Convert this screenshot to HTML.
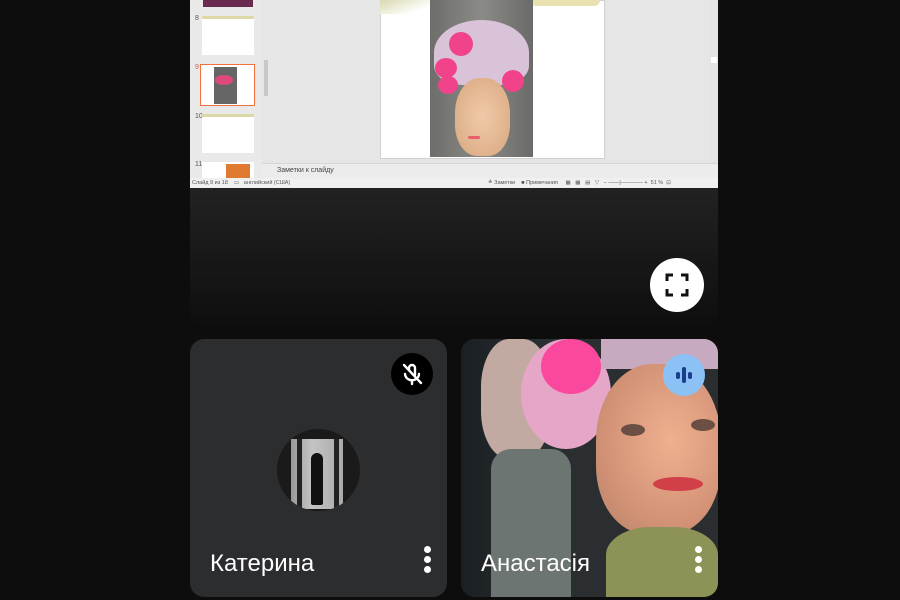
<!DOCTYPE html>
<html><head><meta charset="utf-8"><style>
*{margin:0;padding:0;box-sizing:border-box}
body{width:900px;height:600px;background:#0d0d0d;position:relative;overflow:hidden;font-family:"Liberation Sans",sans-serif}
.a{position:absolute}
</style></head><body>
<!-- screen share -->
<div class="a" style="left:190px;top:0;width:528px;height:326px;border-radius:0 0 14px 14px;overflow:hidden;background:linear-gradient(#3a3a3a,#2a2a2a 40%,#0e0e0e)">
  <div class="a" style="left:0;top:0;width:528px;height:188px;background:#e6e6e6"></div>
  <div class="a" style="left:0;top:0;width:72px;height:178px;background:#e9e9e9"></div>
  <div class="a" style="left:13px;top:0;width:50px;height:7px;background:#6a2a50"></div>
  <div class="a" style="left:5px;top:15px;font-size:7px;color:#555">8</div>
  <div class="a" style="left:12px;top:16px;width:52px;height:39px;background:#fff;border-top:3px solid #dcd8a8"></div>
  <div class="a" style="left:5px;top:64px;font-size:7px;color:#e5562e">9</div>
  <div class="a" style="left:10px;top:64px;width:55px;height:42px;border:1.5px solid #f07040;background:#fff"></div>
  <div class="a" style="left:24px;top:67px;width:23px;height:37px;background:#666"></div>
  <div class="a" style="left:25px;top:75px;width:18px;height:10px;background:#e04880;border-radius:50%"></div>
  <div class="a" style="left:5px;top:113px;font-size:7px;color:#555">10</div>
  <div class="a" style="left:12px;top:114px;width:52px;height:39px;background:#fff;border-top:3px solid #dcd8a8"></div>
  <div class="a" style="left:5px;top:161px;font-size:7px;color:#555">11</div>
  <div class="a" style="left:12px;top:162px;width:52px;height:16px;background:#fff"></div>
  <div class="a" style="left:36px;top:164px;width:24px;height:14px;background:#e07a30"></div>
  <div class="a" style="left:74px;top:60px;width:4px;height:36px;background:#c8c8c8"></div>
  <div class="a" style="left:190px;top:0;width:225px;height:159px;background:#fff;border:1px solid #d0d0d0"></div>
  <div class="a" style="left:190px;top:0;width:60px;height:14px;background:linear-gradient(160deg,#d8d8b0,#fff 70%)"></div>
  <div class="a" style="left:340px;top:0;width:70px;height:6px;background:#e8e2b0;border-radius:0 0 30px 30px"></div>
  <div class="a" style="left:240px;top:0;width:103px;height:157px;background:linear-gradient(90deg,#6d6d6b,#8a8a86 50%,#6a6a68)"></div>
  <div class="a" style="left:244px;top:20px;width:95px;height:65px;border-radius:50% 50% 30% 30%;background:#d9c3d8"></div>
  <div class="a" style="left:259px;top:32px;width:24px;height:24px;border-radius:50%;background:#f0438a"></div>
  <div class="a" style="left:245px;top:58px;width:22px;height:20px;border-radius:50%;background:#f0438a"></div>
  <div class="a" style="left:248px;top:76px;width:20px;height:18px;border-radius:50%;background:#f0438a"></div>
  <div class="a" style="left:312px;top:70px;width:22px;height:22px;border-radius:50%;background:#f0438a"></div>
  <div class="a" style="left:265px;top:78px;width:55px;height:78px;border-radius:45% 45% 40% 40%;background:radial-gradient(#f1c9a8,#d8a880)"></div>
  <div class="a" style="left:278px;top:136px;width:12px;height:3px;background:#e6606a;border-radius:2px"></div>
  <div class="a" style="left:520px;top:0;width:8px;height:178px;background:#e4e4e4"></div>
  <div class="a" style="left:521px;top:57px;width:6px;height:6px;background:#fff"></div>
  <div class="a" style="left:72px;top:163px;width:456px;height:15px;background:#ececec;border-top:1px solid #d6d6d6;font-size:7px;color:#444;padding:3px 0 0 15px">Заметки к слайду</div>
  <div class="a" style="left:0;top:178px;width:528px;height:10px;background:#f0f0f0;font-size:5.5px;color:#555;line-height:10px;padding-left:2px">Слайд 9 из 18 &nbsp;&nbsp; ▭ &nbsp;&nbsp;английский (США)<span style="position:absolute;left:298px">≙ Заметки &nbsp;&nbsp; ■ Примечания &nbsp;&nbsp;&nbsp; ▦ &nbsp; ▦ &nbsp; ▤ &nbsp; ▽ &nbsp; − ——|———— + &nbsp;51 % &nbsp;⊡</span></div>
  <div class="a" style="left:460px;top:258px;width:54px;height:54px;border-radius:50%;background:#fff">
    <svg width="54" height="54" viewBox="0 0 54 54" fill="none" stroke="#111" stroke-width="3"><path d="M17 23v-6h6M31 17h6v6M37 31v6h-6M23 37h-6v-6"/></svg>
  </div>
</div>
<!-- tile 1 -->
<div class="a" style="left:190px;top:339px;width:257px;height:258px;border-radius:14px;background:#2c2d2f">
  <div class="a" style="left:201px;top:14px;width:42px;height:42px;border-radius:50%;background:#000">
    <svg width="42" height="42" viewBox="0 0 42 42" fill="none" stroke="#fff" stroke-width="2.4" stroke-linecap="round"><path d="M18 17v-2a3 3 0 0 1 6 0v7"/><path d="M14 21a7 7 0 0 0 11 5M28 21a7 7 0 0 1-.8 3M21 28v3"/><path d="M13 12l17 18"/></svg>
  </div>
  <div class="a" style="left:87px;top:90px;width:83px;height:82px;border-radius:50%;overflow:hidden;background:#1a1a1a">
    <div class="a" style="left:14px;top:10px;width:52px;height:70px;background:linear-gradient(90deg,#999,#c4c4c4 40%,#aaa)"></div>
    <div class="a" style="left:20px;top:10px;width:5px;height:70px;background:#222"></div>
    <div class="a" style="left:57px;top:10px;width:5px;height:70px;background:#222"></div>
    <div class="a" style="left:34px;top:24px;width:12px;height:52px;border-radius:6px 6px 2px 2px;background:#111"></div>
  </div>
  <div class="a" style="left:20px;top:211px;font-size:24px;color:#fff;font-weight:500">Катерина</div>
  <div class="a" style="left:234px;top:207px;width:7px;height:7px;border-radius:50%;background:#fff;box-shadow:0 10px #fff,0 20px #fff"></div>
</div>
<!-- tile 2 -->
<div class="a" style="left:461px;top:339px;width:257px;height:258px;border-radius:14px;overflow:hidden;background:#2a2e30">
  <div class="a" style="left:0;top:0;width:100px;height:258px;background:linear-gradient(90deg,#1a1f22,#2c3236)"></div>
  <div class="a" style="left:20px;top:0;width:70px;height:120px;border-radius:40%;background:#c2aaa2"></div>
  <div class="a" style="left:30px;top:110px;width:80px;height:148px;background:#6d7572;border-radius:20px 20px 0 0"></div>
  <div class="a" style="left:60px;top:0;width:90px;height:110px;border-radius:50%;background:#e6a6c7"></div>
  <div class="a" style="left:80px;top:0;width:60px;height:55px;border-radius:50%;background:#f9489d"></div>
  <div class="a" style="left:140px;top:0;width:117px;height:30px;background:#c7aabf"></div>
  <div class="a" style="left:135px;top:25px;width:125px;height:170px;border-radius:45% 45% 40% 40%;background:radial-gradient(ellipse at 60% 45%,#f0b08f,#d49377 60%,#b58268)"></div>
  <div class="a" style="left:160px;top:85px;width:24px;height:12px;border-radius:50%;background:#6b4e44"></div>
  <div class="a" style="left:230px;top:80px;width:24px;height:12px;border-radius:50%;background:#6b4e44"></div>
  <div class="a" style="left:192px;top:138px;width:50px;height:14px;border-radius:50%;background:#d13f48"></div>
  <div class="a" style="left:145px;top:188px;width:112px;height:70px;border-radius:40% 40% 0 0;background:#8d9356"></div>
  <div class="a" style="left:202px;top:15px;width:42px;height:42px;border-radius:50%;background:#8bc1f5">
    <svg width="42" height="42" viewBox="0 0 42 42" stroke="#1a3e8c" stroke-width="4" stroke-linecap="round"><path d="M15 20v3M21 15v12M27 20v3"/></svg>
  </div>
  <div class="a" style="left:20px;top:211px;font-size:24px;color:#fff;font-weight:500">Анастасія</div>
  <div class="a" style="left:234px;top:207px;width:7px;height:7px;border-radius:50%;background:#fff;box-shadow:0 10px #fff,0 20px #fff"></div>
</div>
</body></html>
